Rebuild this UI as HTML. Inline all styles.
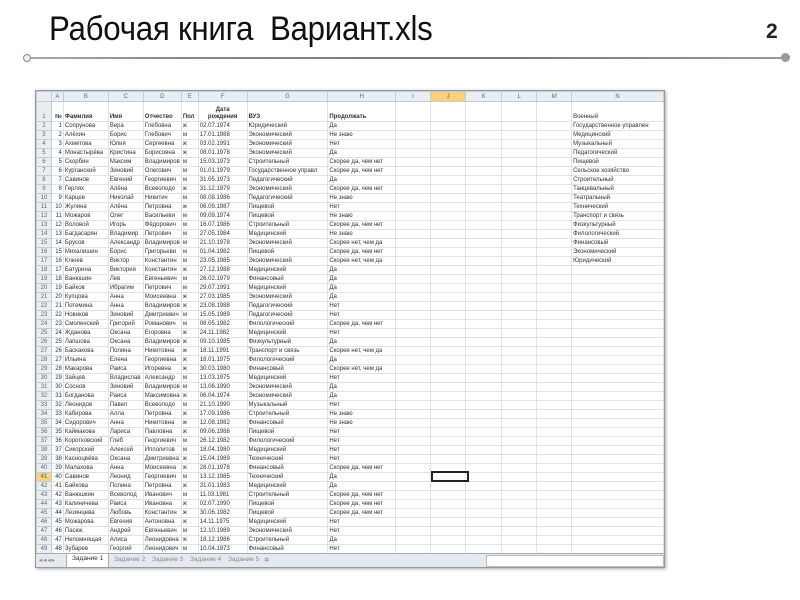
<!DOCTYPE html>
<html><head><meta charset="utf-8"><style>
body{margin:0;width:800px;height:600px;background:#fff;position:relative;overflow:hidden;font-family:"Liberation Sans","DejaVu Sans",sans-serif}
.title{position:absolute;left:49px;top:10px;font-size:34px;color:#111;letter-spacing:-0.3px;white-space:nowrap;transform:scaleX(0.92);transform-origin:left}
.num{position:absolute;left:766px;top:20px;font-size:21px;font-weight:bold;color:#222}
.line{position:absolute;left:27px;top:57px;width:760px;height:2px;background:linear-gradient(90deg,#aaa,#888 20%,#777 60%,#999)}
.c1{position:absolute;left:23px;top:54px;width:6px;height:6px;border:1.5px solid #888;border-radius:50%;background:#eee}
.c2{position:absolute;left:781px;top:53px;width:9px;height:9px;border-radius:50%;background:#999}
.sheet{position:absolute;left:35px;top:90px;width:628px;height:476px;border:1px solid #999;box-shadow:1px 1px 3px #aaa;overflow:hidden;background:#fff}
table{border-collapse:collapse;table-layout:fixed;font-size:6px;color:#333}
tr{height:9px}
td{border:1px solid #dde3ea;padding:0 1px;white-space:nowrap;overflow:hidden;height:8px;line-height:8px;vertical-align:middle}
td:nth-child(2){text-align:right}
tr.h{height:10px}
tr.h td{background:#e9eef4;color:#666;text-align:center;height:9px;border-color:#c5ccd5}
td:first-child{background:#e9eef4;color:#666;text-align:center;border-color:#c5ccd5}
tr.r1{height:20px}
tr.r1 td{height:19px;vertical-align:bottom;font-weight:bold;line-height:7px}
tr.r1 td:first-child{font-weight:normal}
td.sel{background:#f7d27a!important}
.tabs{position:absolute;left:0;bottom:0;width:628px;height:13px;background:#e4e9ef;border-top:1px solid #aab;font-size:6.5px;color:#888}
.tabs span{position:absolute;top:2px}
.selc{position:absolute;left:395px;top:380px;width:34px;height:7px;border:2px solid #222}
</style></head><body>
<div class="title">Рабочая книга&nbsp; Вариант.xls</div>
<div class="num">2</div>
<div class="line"></div><div class="c1"></div><div class="c2"></div>
<div class="sheet">
<table>
<colgroup><col style="width:15px"><col style="width:12px"><col style="width:45px"><col style="width:35px"><col style="width:38px"><col style="width:17px"><col style="width:49px"><col style="width:81px"><col style="width:68px"><col style="width:35px"><col style="width:36px"><col style="width:36px"><col style="width:36px"><col style="width:35px"><col style="width:92px"></colgroup>
<tr class="h"><td><td style="text-align:center">A<td>B<td>C<td>D<td>E<td>F<td>G<td>H<td>I<td class="sel">J<td>K<td>L<td>M<td>N</tr>
<tr class="r1"><td>1<td>№<td>Фамилия<td>Имя<td>Отчество<td>Пол<td style="text-align:center">Дата<br>рождения<td>ВУЗ<td>Продолжать<td><td><td><td><td><td style="font-weight:normal">Военный</tr>
<tr><td>2<td>1<td>Сопрунова<td>Вера<td>Глебовна<td>ж<td>02.07.1974<td>Юридический<td>Да<td><td><td><td><td><td>Государственное управлен</tr>
<tr><td>3<td>2<td>Алёхин<td>Борис<td>Глебович<td>м<td>17.01.1988<td>Экономический<td>Не знаю<td><td><td><td><td><td>Медицинский</tr>
<tr><td>4<td>3<td>Ахметова<td>Юлия<td>Сергеевна<td>ж<td>03.02.1991<td>Экономический<td>Нет<td><td><td><td><td><td>Музыкальный</tr>
<tr><td>5<td>4<td>Монастырёва<td>Кристина<td>Борисовна<td>ж<td>08.01.1978<td>Экономический<td>Да<td><td><td><td><td><td>Педагогический</tr>
<tr><td>6<td>5<td>Скорбин<td>Максим<td>Владимиров<td>м<td>15.03.1973<td>Строительный<td>Скорее да, чем нет<td><td><td><td><td><td>Пищевой</tr>
<tr><td>7<td>6<td>Курганский<td>Зиновий<td>Олегович<td>м<td>01.01.1979<td>Государственное управл<td>Скорее да, чем нет<td><td><td><td><td><td>Сельское хозяйство</tr>
<tr><td>8<td>7<td>Савинов<td>Евгений<td>Георгиевич<td>м<td>31.05.1973<td>Педагогический<td>Да<td><td><td><td><td><td>Строительный</tr>
<tr><td>9<td>8<td>Герлях<td>Алёна<td>Всеволодо<td>ж<td>31.12.1979<td>Экономический<td>Скорее да, чем нет<td><td><td><td><td><td>Танцевальный</tr>
<tr><td>10<td>9<td>Карцев<td>Николай<td>Никитич<td>м<td>08.08.1986<td>Педагогический<td>Не знаю<td><td><td><td><td><td>Театральный</tr>
<tr><td>11<td>10<td>Жулина<td>Алёна<td>Петровна<td>ж<td>06.09.1987<td>Пищевой<td>Нет<td><td><td><td><td><td>Технический</tr>
<tr><td>12<td>11<td>Можаров<td>Олег<td>Васильеви<td>м<td>09.09.1974<td>Пищевой<td>Не знаю<td><td><td><td><td><td>Транспорт и связь</tr>
<tr><td>13<td>12<td>Воловой<td>Игорь<td>Фёдорович<td>м<td>16.07.1986<td>Строительный<td>Скорее да, чем нет<td><td><td><td><td><td>Физкультурный</tr>
<tr><td>14<td>13<td>Багдасарян<td>Владимир<td>Петрович<td>м<td>27.05.1984<td>Медицинский<td>Не знаю<td><td><td><td><td><td>Филологический</tr>
<tr><td>15<td>14<td>Брусов<td>Александр<td>Владимиров<td>м<td>21.10.1978<td>Экономический<td>Скорее нет, чем да<td><td><td><td><td><td>Финансовый</tr>
<tr><td>16<td>15<td>Михалишин<td>Борис<td>Григорьеви<td>м<td>01.04.1982<td>Пищевой<td>Скорее да, чем нет<td><td><td><td><td><td>Экономический</tr>
<tr><td>17<td>16<td>Клюев<td>Виктор<td>Константин<td>м<td>23.05.1985<td>Экономический<td>Скорее нет, чем да<td><td><td><td><td><td>Юридический</tr>
<tr><td>18<td>17<td>Батурина<td>Виктория<td>Константин<td>ж<td>27.12.1988<td>Медицинский<td>Да<td><td><td><td><td><td></tr>
<tr><td>19<td>18<td>Ванюшин<td>Лев<td>Евгеньевич<td>м<td>26.02.1979<td>Финансовый<td>Да<td><td><td><td><td><td></tr>
<tr><td>20<td>19<td>Байков<td>Ибрагим<td>Петрович<td>м<td>29.07.1991<td>Медицинский<td>Да<td><td><td><td><td><td></tr>
<tr><td>21<td>20<td>Купцова<td>Анна<td>Моисеевна<td>ж<td>27.03.1985<td>Экономический<td>Да<td><td><td><td><td><td></tr>
<tr><td>22<td>21<td>Потемина<td>Анна<td>Владимиров<td>ж<td>23.08.1988<td>Педагогический<td>Нет<td><td><td><td><td><td></tr>
<tr><td>23<td>22<td>Новиков<td>Зиновий<td>Дмитриевич<td>м<td>15.05.1989<td>Педагогический<td>Нет<td><td><td><td><td><td></tr>
<tr><td>24<td>23<td>Смоленский<td>Григорий<td>Романович<td>м<td>08.05.1982<td>Филологический<td>Скорее да, чем нет<td><td><td><td><td><td></tr>
<tr><td>25<td>24<td>Жданова<td>Оксана<td>Егоровна<td>ж<td>24.11.1982<td>Медицинский<td>Нет<td><td><td><td><td><td></tr>
<tr><td>26<td>25<td>Лапшова<td>Оксана<td>Владимиров<td>ж<td>09.10.1985<td>Физкультурный<td>Да<td><td><td><td><td><td></tr>
<tr><td>27<td>26<td>Баскакова<td>Полина<td>Никитовна<td>ж<td>18.11.1991<td>Транспорт и связь<td>Скорее нет, чем да<td><td><td><td><td><td></tr>
<tr><td>28<td>27<td>Ильина<td>Елена<td>Георгиевна<td>ж<td>18.01.1975<td>Филологический<td>Да<td><td><td><td><td><td></tr>
<tr><td>29<td>28<td>Макарова<td>Раиса<td>Игоревна<td>ж<td>30.03.1980<td>Финансовый<td>Скорее нет, чем да<td><td><td><td><td><td></tr>
<tr><td>30<td>29<td>Зайцев<td>Владислав<td>Александр<td>м<td>13.03.1975<td>Медицинский<td>Нет<td><td><td><td><td><td></tr>
<tr><td>31<td>30<td>Соснов<td>Зиновий<td>Владимиров<td>м<td>13.06.1990<td>Экономический<td>Да<td><td><td><td><td><td></tr>
<tr><td>32<td>31<td>Богданова<td>Раиса<td>Максимовна<td>ж<td>06.04.1974<td>Экономический<td>Да<td><td><td><td><td><td></tr>
<tr><td>33<td>32<td>Леонидов<td>Павел<td>Всеволодо<td>м<td>21.10.1990<td>Музыкальный<td>Нет<td><td><td><td><td><td></tr>
<tr><td>34<td>33<td>Кабирова<td>Алла<td>Петровна<td>ж<td>17.09.1986<td>Строительный<td>Не знаю<td><td><td><td><td><td></tr>
<tr><td>35<td>34<td>Сидорович<td>Анна<td>Никитовна<td>ж<td>12.08.1982<td>Финансовый<td>Не знаю<td><td><td><td><td><td></tr>
<tr><td>36<td>35<td>Каймакова<td>Лариса<td>Павловна<td>ж<td>09.06.1988<td>Пищевой<td>Нет<td><td><td><td><td><td></tr>
<tr><td>37<td>36<td>Коротковский<td>Глеб<td>Георгиевич<td>м<td>26.12.1982<td>Филологический<td>Нет<td><td><td><td><td><td></tr>
<tr><td>38<td>37<td>Сикорский<td>Алексей<td>Ипполитов<td>м<td>18.04.1980<td>Медицинский<td>Нет<td><td><td><td><td><td></tr>
<tr><td>39<td>38<td>Касноцвёва<td>Оксана<td>Дмитриевна<td>ж<td>15.04.1989<td>Технический<td>Нет<td><td><td><td><td><td></tr>
<tr><td>40<td>39<td>Малахова<td>Анна<td>Моисеевна<td>ж<td>28.01.1978<td>Финансовый<td>Скорее да, чем нет<td><td><td><td><td><td></tr>
<tr><td class="sel">41<td>40<td>Савинов<td>Леонид<td>Георгиевич<td>м<td>13.12.1985<td>Технический<td>Да<td><td><td><td><td><td></tr>
<tr><td>42<td>41<td>Байкова<td>Полина<td>Петровна<td>ж<td>31.01.1983<td>Медицинский<td>Да<td><td><td><td><td><td></tr>
<tr><td>43<td>42<td>Ванюшкин<td>Всеволод<td>Иванович<td>м<td>11.03.1981<td>Строительный<td>Скорее да, чем нет<td><td><td><td><td><td></tr>
<tr><td>44<td>43<td>Калиничева<td>Раиса<td>Ивановна<td>ж<td>02.07.1990<td>Пищевой<td>Скорее да, чем нет<td><td><td><td><td><td></tr>
<tr><td>45<td>44<td>Лезинцева<td>Любовь<td>Константин<td>ж<td>30.06.1982<td>Пищевой<td>Скорее да, чем нет<td><td><td><td><td><td></tr>
<tr><td>46<td>45<td>Можарова<td>Евгения<td>Антоновна<td>ж<td>14.11.1975<td>Медицинский<td>Нет<td><td><td><td><td><td></tr>
<tr><td>47<td>46<td>Пасюк<td>Андрей<td>Евгеньевич<td>м<td>12.10.1989<td>Экономический<td>Нет<td><td><td><td><td><td></tr>
<tr><td>48<td>47<td>Непомнящая<td>Алиса<td>Леонидовна<td>ж<td>18.12.1986<td>Строительный<td>Да<td><td><td><td><td><td></tr>
<tr><td>49<td>48<td>Зубарев<td>Георгий<td>Леонидович<td>м<td>10.04.1973<td>Финансовый<td>Нет<td><td><td><td><td><td></tr>
</table>
<div class="selc"></div>
<div class="tabs">
<span style="left:3px;letter-spacing:1px">◂◂◂▸</span>
<span style="left:30px;top:0;height:12px;background:#fff;padding:1px 5px;color:#333;border:1px solid #aab;border-top:none">Задание 1</span>
<span style="left:78px">Задание 2</span>
<span style="left:116px">Задание 3</span>
<span style="left:154px">Задание 4</span>
<span style="left:192px">Задание 5</span>
<span style="left:228px">✲</span>
<span style="left:450px;top:1px;width:176px;height:10px;background:#fff;border:1px solid #bbc"></span>
</div>
</div>
</body></html>
